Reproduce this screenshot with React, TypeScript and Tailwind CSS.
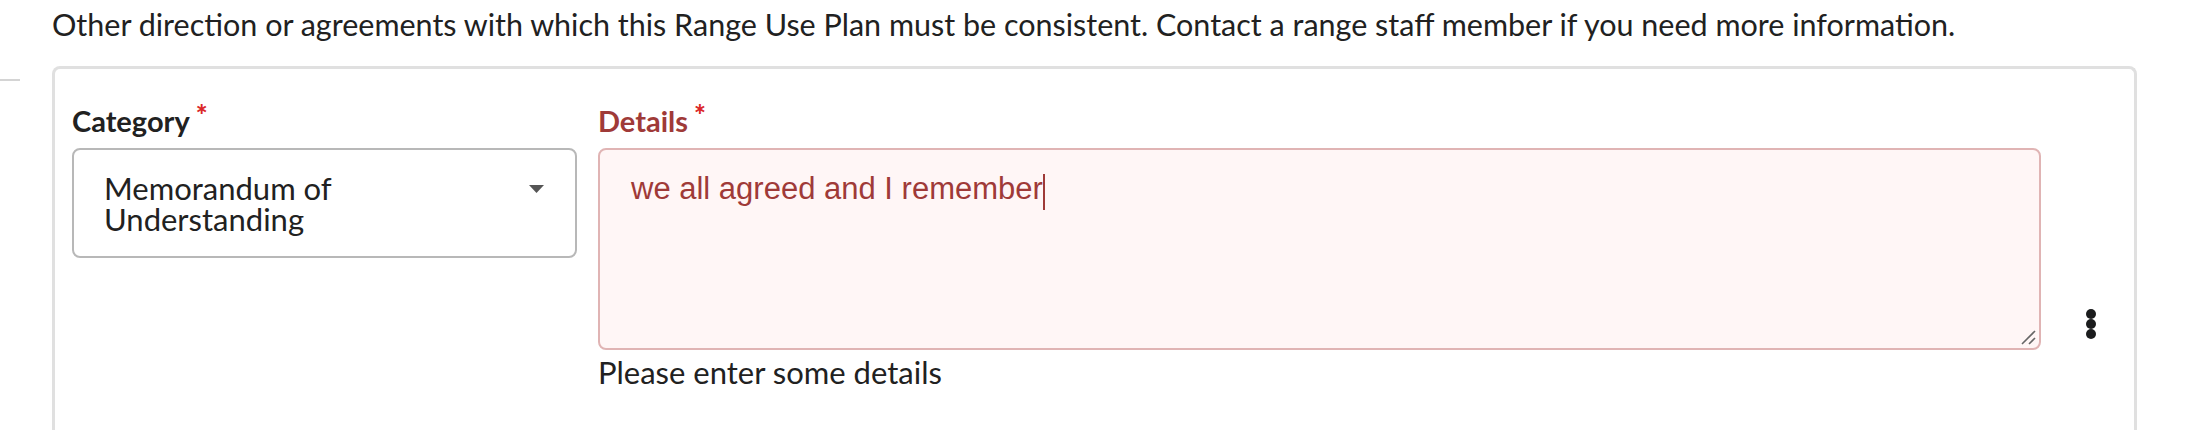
import React from "react";

function Kebab() {
  return (
    <div className="flex flex-col items-center">
      <span className="w-[10px] h-[10px] rounded-full bg-[#1b1c1d]" />
      <span className="w-[10px] h-[10px] rounded-full bg-[#1b1c1d]" />
      <span className="w-[10px] h-[10px] rounded-full bg-[#1b1c1d]" />
    </div>
  );
}

function Label({ text, error }: { text: string; error?: boolean }) {
  return (
    <label
      className={`block text-[29px] leading-[36px] font-bold ${
        error ? "text-[#9f3a38]" : "text-[#212121]"
      }`}
    >
      {text}
      <span className="inline-block ml-[6px] align-top text-[28px] leading-[22px] font-black text-[#db2828]">*</span>
    </label>
  );
}

export default function App() {
  return (
    <div className="w-[2212px] h-[430px] overflow-hidden bg-white font-['Lato',sans-serif] text-[#212121]">
      <p className="pl-[52px] pt-[4px] text-[30.5px] leading-[40px]">
        Other direction or agreements with which this Range Use Plan must be consistent. Contact a
        range staff member if you need more information.
      </p>

      <div className="flex mt-[22px]">
        <div className="w-[52px] shrink-0 pt-[13px]">
          <div className="w-[20px] h-[2px] bg-[#d4d4d4]" />
        </div>

        <div className="w-[2085px] h-[380px] shrink-0 rounded-t-[8px] border-[3px] border-b-0 border-[#e0e0e0] pl-[17px] pt-[34px]">
          <div className="flex">
            {/* category */}
            <div className="w-[505px] shrink-0">
              <Label text="Category" />
              <div className="mt-[9px] h-[110px] rounded-[8px] border-2 border-[#b8b8b8] pl-[30px] pr-[31px] pt-[23px] flex items-start justify-between">
                <span className="w-[300px] text-[31px] leading-[31px]">
                  Memorandum of Understanding
                </span>
                <svg width="15" height="8" viewBox="0 0 15 8" className="mt-[12px]">
                  <path d="M0 0 L15 0 L7.5 8 Z" fill="#555555" />
                </svg>
              </div>
            </div>

            {/* details */}
            <div className="w-[1443px] shrink-0 ml-[21px]">
              <Label text="Details" error />
              <div className="relative mt-[9px] h-[202px] rounded-[8px] border-2 border-[#e0b4b4] bg-[#fff6f6] pl-[31px] pt-[22px]">
                <span className="font-['Liberation_Sans',Arial,sans-serif] text-[31px] leading-[34px] text-[#9f3a38]">
                  we all agreed and I remember
                </span>
                <span className="inline-block align-middle w-[2px] h-[36px] -mt-[6px] bg-[#9f3a38]" />
                <svg
                  width="16"
                  height="16"
                  viewBox="0 0 16 16"
                  className="absolute right-[3px] bottom-[3px]"
                >
                  <path d="M15 2 L2 15" stroke="#666" strokeWidth="1.6" />
                  <path d="M15 9 L9 15" stroke="#666" strokeWidth="1.6" />
                </svg>
              </div>
              <div className="mt-[2px] text-[31px] leading-[40px]">Please enter some details</div>
            </div>

            {/* actions */}
            <div className="flex-1 flex justify-center pl-[7px] pt-[206px]">
              <Kebab />
            </div>
          </div>
        </div>
      </div>
    </div>
  );
}
